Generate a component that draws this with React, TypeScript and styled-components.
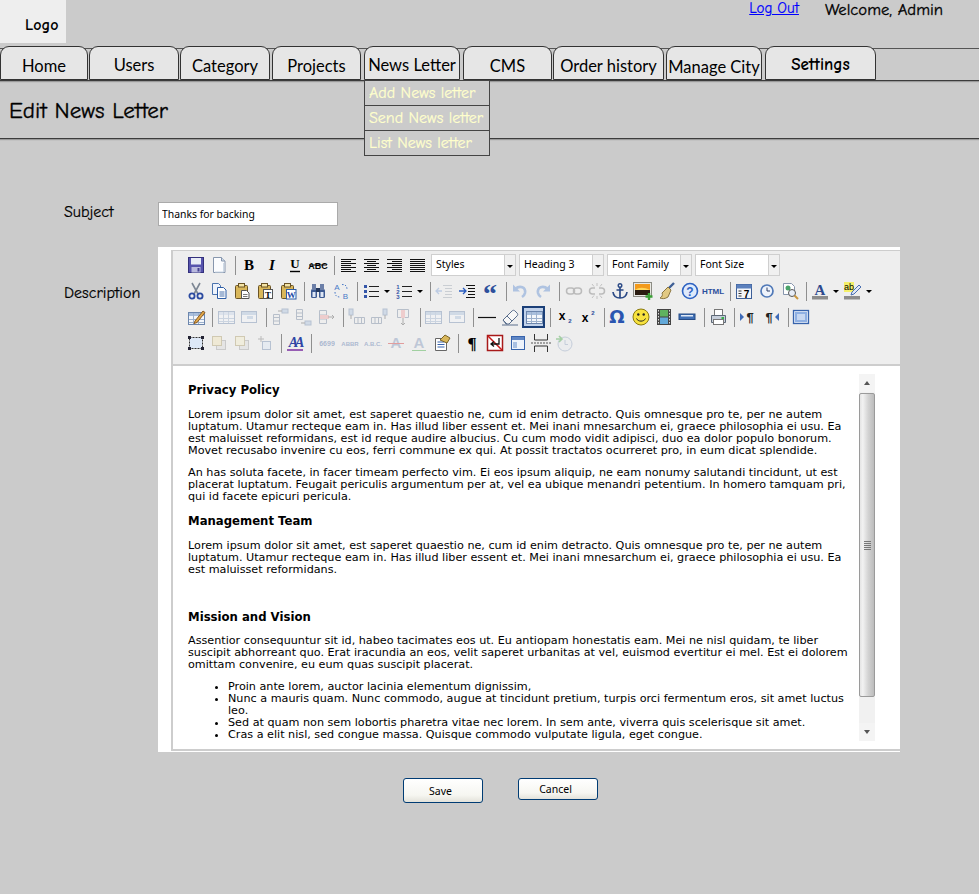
import React from "react";
import styled, { createGlobalStyle } from "styled-components";

const SKETCH = `"Comic Neue", "DejaVu Sans", sans-serif`;
const TAB = `Lato, "Open Sans", sans-serif`;
const UI = `"Noto Sans", Tahoma, sans-serif`;

const Global = createGlobalStyle`
  html, body { margin: 0; padding: 0; background: #cbcbcb; }
  body { width: 979px; height: 894px; overflow: hidden; }
`;

const Page = styled.div`width: 979px; height: 894px; background: #cbcbcb; color: #000;`;
const TopBar = styled.header`display: flex; height: 47px; align-items: flex-start; padding-right: 36px;`;
const Logo = styled.div`
  width: 66px; height: 43px; background: #eeeeee; box-sizing: border-box; padding: 16px 0 0 25px;
  font: bold 16px/18px ${SKETCH};
`;
const UserBox = styled.div`margin-left: auto; display: flex; gap: 26px; align-items: flex-start;`;
const LogOut = styled.a`color: #0000ff; text-decoration: underline; font: 15px/17px ${SKETCH}; -webkit-text-stroke: 0.2px #0000ff;`;
const Welcome = styled.span`font: 16.7px/20px ${SKETCH}; -webkit-text-stroke: 0.3px #000;`;

const Nav = styled.nav`
  display: flex; height: 33px; align-items: flex-end; padding-top: 0; position: relative;
  border-bottom: 1px solid #3c3c3c; box-shadow: 0 1px 1px #9a9a9a;
  &::before { content: ""; position: absolute; left: 0; right: 0; top: 1px; border-top: 1px solid #555; }
`;
const Tab = styled.div<{ $w: number; $gap: number; $sketch?: boolean; $shift?: number }>`
  position: relative; z-index: 1; box-sizing: border-box; width: ${p => p.$w}px; height: 34px; margin-right: ${p => p.$gap}px;
  background: #e6e6e6; border: 1px solid #333; border-bottom-width: 1px; border-radius: 9px 9px 0 0;
  display: flex; justify-content: center; align-items: center;
  padding-top: ${p => p.$shift ?? 5}px; white-space: nowrap;
  font: ${p => (p.$sketch ? `bold 17px ${SKETCH}` : `16.5px ${TAB}`)};
`;
const Drop = styled.div`
  position: absolute; top: 33px; left: -1px; width: 126px; z-index: 3; background: #cbcbcb;
  border: 1px solid #444; box-sizing: border-box;
`;
const DropItem = styled.div`
  height: 25px; box-sizing: border-box; padding-left: 4px; color: #ffffcc; font: 16px/25px ${SKETCH};
  -webkit-text-stroke: 0.2px #ffffcc; text-align: left; border-bottom: 1px solid #444;
  &:last-child { border-bottom: none; height: 24px; }
`;

const TitleBar = styled.div`height: 57px; border-bottom: 1px solid #3c3c3c; box-shadow: 0 1px 1px #9a9a9a; padding-left: 9px; display: flex; align-items: center;`;
const Title = styled.h1`margin: 2px 0 0; font: normal 23px/24px ${SKETCH}; -webkit-text-stroke: 0.35px #000;`;

const Form = styled.div`display: grid; grid-template-columns: 158px 742px; padding-top: 63px; row-gap: 21px;`;
const Label = styled.label<{ $top: number }>`padding: ${p => p.$top}px 0 0 64px; font: 16px/18px ${SKETCH}; -webkit-text-stroke: 0.2px #000;`;
const Input = styled.input`
  box-sizing: border-box; width: 180px; height: 24px; background: #fff; border: 1px solid #aaa; padding: 1px 3px; font: 10.4px ${UI}; color: #000; outline: none; display: block;
`;

const Editor = styled.div`
  height: 505px; background: #fff; padding: 3px 0 0 13px; box-sizing: border-box; display: flex; flex-direction: column;
`;
const EditorInner = styled.div`
  flex: none; height: 501px; border-left: 2px solid #cdcdcd; border-top: 1px solid #cdcdcd; border-bottom: 2px solid #cdcdcd; box-sizing: border-box; display: flex; flex-direction: column;
`;
const Toolbar = styled.div`height: 112px; background: #eeeeee; border-bottom: 2px solid #cdcdcd; padding: 1px 0 0 11px; flex: none;`;
const ToolRow = styled.div<{ $step?: number }>`
  --step: ${p => p.$step ?? 23}px; display: flex; align-items: center; height: 26px;
`;
const Btn = styled.span<{ $off?: boolean; $sel?: boolean; $w?: number }>`
  width: ${p => (p.$w ? `${p.$w}px` : "var(--step)")}; height: 22px; flex: none; display: flex; align-items: center; justify-content: center; box-sizing: border-box;
  opacity: ${p => (p.$off ? 0.42 : 1)};
  ${p => p.$sel && "background:#c2d2ea; outline:2px solid #1b3f78; outline-offset:-2px;"}
  svg { display: block; overflow: visible; }
`;
const Caret = styled.span`
  width: 10px; flex: none; display: flex; justify-content: center; padding-top: 1px;
  &::after { content: ""; border: 3px solid transparent; border-top: 3px solid #000; border-bottom: 0; }
`;
const Sep = styled.span<{ $tail?: number }>`
  width: 1px; height: 19px; background: #8f8f8f; flex: none; margin: 0 ${p => p.$tail ?? 1}px 0 5px;
`;
const Select = styled.div`
  width: 85px; height: 22px; margin-right: 3px; display: flex; flex: none; box-sizing: border-box; border: 1px solid #cfcfcf;
  &:first-of-type { margin-left: 3px; }
`;
const SelectText = styled.div`flex: 1; background: #fff; padding-left: 4px; font: 10.5px/19px ${UI};`;
const SelectArrow = styled.div`
  width: 10px; border-left: 1px solid #cfcfcf; background: #f0f0f0; display: flex; align-items: center; justify-content: center;
  &::after { content: ""; border: 3px solid transparent; border-top: 3px solid #000; border-bottom: 0; margin-top: 2px; }
`;

const Body = styled.div`flex: 1; min-height: 0; display: flex; justify-content: space-between; padding: 8px 25px 8px 15px; background: #fff;`;
const Content = styled.div`width: 668px; font: 11.2px/12px "DejaVu Sans", Verdana, sans-serif; white-space: nowrap; padding-top: 9px;`;
const H3 = styled.h3<{ $top?: number }>`margin: ${p => p.$top ?? 0}px 0 0; font: bold 11.7px/15px "DejaVu Sans", Verdana, sans-serif;`;
const Para = styled.p<{ $top?: number }>`margin: ${p => p.$top ?? 10}px 0 0;`;
const List = styled.ul`margin: 10px 0 0; padding-left: 40px;`;

const Scroll = styled.div`width: 16px; flex: none; background: #f1f1f1; display: flex; flex-direction: column; height: 367px;`;
const ScrollEnd = styled.div<{ $down?: boolean }>`
  height: 18px; flex: none; display: flex; align-items: center; justify-content: center; background: #f4f4f4;
  &::after { content: ""; border: 3.5px solid transparent; ${p => (p.$down ? "border-top: 4px solid #555; border-bottom: 0;" : "border-bottom: 4px solid #555; border-top: 0;")} }
`;
const Thumb = styled.div`
  height: 304px; margin: 1px 0 0 0; box-sizing: border-box; border: 1px solid #9a9a9a; border-radius: 2px; flex: none;
  background: linear-gradient(90deg, #e4e4e4, #f2f2f2 20%, #d2d2d2 60%, #bcbcbc 100%); display: flex; align-items: center; justify-content: center;
`;
const Grip = styled.div`width: 7px; height: 9px; margin-top: 0; background: repeating-linear-gradient(180deg, #777 0 1px, transparent 1px 2px);`;
const ScrollFill = styled.div`flex: 1;`;

const Actions = styled.div`display: flex; gap: 35px; padding: 26px 0 0 403px; align-items: flex-start;`;
const Button = styled.button<{ $h: number }>`
  width: 80px; height: ${p => p.$h}px; box-sizing: border-box; border: 1px solid #003c74; border-radius: 3px;
  background: linear-gradient(180deg, #ffffff, #f6f6f1 70%, #e3e2da); font: 10.5px ${UI}; color: #000; padding: 0 5px 0 0;
`;

/* ---------- toolbar drawings ---------- */
const S: React.FC<{ children: React.ReactNode; w?: number }> = ({ children, w = 18 }) => (
  <svg width={w} height={18} viewBox={`0 0 ${w} 18`}>{children}</svg>
);
const lines = (rows: number[][]) => rows.map(r => `M${r[0]} ${r[2]}H${r[1]}`).join("");
const T: React.FC<{ x?: number; y?: number; s?: number; f?: string; c?: string; w?: string; it?: boolean; ls?: number; children: string }> = ({ x = 9, y = 14, s = 13, f = "Liberation Serif", c = "#000", w = "bold", it, ls, children }) => (
  <text x={x} y={y} fontSize={s} fontFamily={f} fill={c} fontWeight={w} fontStyle={it ? "italic" : "normal"} letterSpacing={ls} textAnchor="middle">{children}</text>
);
const Clip = ({ children }: { children?: React.ReactNode }) => (
  <g>
    <rect x="2.5" y="3.5" width="12" height="13" rx="1" fill="#d9b75a" stroke="#6b5426" />
    <rect x="5.5" y="1.5" width="6" height="3.5" fill="#f3e3a5" stroke="#6b5426" />
    {children}
  </g>
);
const Grid = ({ hl, x = 1, y = 3, w = 16, h = 12 }: { hl?: string; x?: number; y?: number; w?: number; h?: number }) => (
  <g>
    <rect x={x + 0.5} y={y + 0.5} width={w} height={h} fill="#f4f7fb" stroke="#6c86ad" />
    <rect x={x + 1} y={y + 1} width={w - 1} height="3" fill={hl ?? "#a9bfdd"} />
    <path d={`M${x + 1} ${y + 7.5}H${x + w}M${x + 1} ${y + 10.5}H${x + w}M${x + 5.5} ${y + 1}V${y + h}M${x + 10.5} ${y + 1}V${y + h}`} stroke="#9db1cd" fill="none" />
  </g>
);
const Stack = ({ a = "#f2e3b3" }: { a?: string }) => (
  <g>
    <rect x="6.5" y="6.5" width="9" height="9" fill="#d9d9d9" stroke="#999" />
    <rect x="2.5" y="2.5" width="9" height="9" fill={a} stroke="#a89760" />
  </g>
);
const Col = ({ d, c = "#6d7f99" }: { d: string; c?: string }) => <path d={d} stroke={c} fill="none" />;

const icons: Record<string, React.ReactNode> = {
  save: <S><rect x="1.5" y="1.5" width="15" height="15" fill="#5653ad" stroke="#33307c" /><rect x="4" y="2" width="10" height="6.5" fill="#e8ecf6" /><rect x="4.5" y="11" width="9" height="5.5" fill="#b9b9de" /><rect x="10.5" y="12" width="2" height="3.5" fill="#44418f" /></S>,
  newdoc: <S><path d="M3.5 1.5h8l3.5 3.5v11.5h-11.5z" fill="#fbfcfe" stroke="#8796ad" /><path d="M11.5 1.5v3.5h3.5" fill="#cfdbe9" stroke="#8796ad" /><path d="M13.5 7v9H5" stroke="#cdd9e6" fill="none" /></S>,
  b: <S><T s={15}>B</T></S>,
  i: <S><T s={15} it>I</T></S>,
  u: <S><T s={13} y={12}>U</T><path d="M4 15.5h10" stroke="#000" strokeWidth="1.4" /></S>,
  abc: <S w={20}><T x={10} y={12.5} s={9} f="Liberation Sans">ABC</T><path d="M1 9h18" stroke="#000" /></S>,
  al: <S><path d={lines([[2, 17, 3], [2, 12, 5], [2, 17, 7], [2, 12, 9], [2, 17, 11], [2, 12, 13], [2, 17, 15]].map(r => [r[0], r[1], r[2] + 0.5]))} stroke="#111" /></S>,
  ac: <S><path d={lines([[2, 17, 3], [5, 14, 5], [2, 17, 7], [5, 14, 9], [2, 17, 11], [5, 14, 13], [2, 17, 15]].map(r => [r[0], r[1], r[2] + 0.5]))} stroke="#111" /></S>,
  ar: <S><path d={lines([[2, 17, 3], [7, 17, 5], [2, 17, 7], [7, 17, 9], [2, 17, 11], [7, 17, 13], [2, 17, 15]].map(r => [r[0], r[1], r[2] + 0.5]))} stroke="#111" /></S>,
  aj: <S><path d={lines([3, 5, 7, 9, 11, 13, 15].map(y => [2, 17, y + 0.5]))} stroke="#111" /></S>,
  cut: <S><path d="M5 1l6 11M13 1L7 12" stroke="#7d8794" strokeWidth="1.6" fill="none" /><circle cx="5" cy="14" r="2.6" fill="none" stroke="#2b4aa0" strokeWidth="1.8" /><circle cx="13" cy="14" r="2.6" fill="none" stroke="#2b4aa0" strokeWidth="1.8" /></S>,
  copy: <S><path d="M2.5 1.5h6l2 2v9h-8z" fill="#eef3fb" stroke="#4b73ad" /><path d="M7.5 5.5h6l2.5 2.5v8.5h-8.5z" fill="#fff" stroke="#2d5da6" /><path d="M9.5 10h5M9.5 12h5M9.5 14h5" stroke="#4b73ad" /></S>,
  paste: <S><Clip><path d="M8.5 8.5h5l2.5 2.5v5.5h-7.5z" fill="#fff" stroke="#555" /><path d="M10 12.5h4.5M10 14.5h4.5" stroke="#777" /></Clip></S>,
  pastet: <S><Clip><rect x="7.5" y="7.5" width="9" height="9" fill="#fff" stroke="#555" /><T x={12} y={15.5} s={9}>T</T></Clip></S>,
  pastew: <S><Clip><rect x="7.5" y="7.5" width="9.5" height="9.5" fill="#fff" stroke="#2d5da6" /><T x={12.2} y={15.7} s={9} c="#2247a5">W</T></Clip></S>,
  find: <S><rect x="2" y="7" width="6" height="9" rx="1.5" fill="#3d5a92" /><rect x="10" y="7" width="6" height="9" rx="1.5" fill="#3d5a92" /><rect x="3" y="2" width="4" height="6" fill="#6c7fa8" /><rect x="11" y="2" width="4" height="6" fill="#6c7fa8" /><rect x="7" y="6" width="4" height="4" fill="#24395f" /><rect x="3.5" y="10" width="3" height="5" fill="#dfe7f5" /><rect x="11.5" y="10" width="3" height="5" fill="#dfe7f5" /></S>,
  replace: <S><T x={5} y={8} s={8} f="Liberation Sans" c="#4a7bc8" w="normal">A</T><T x={13.5} y={16.5} s={8} f="Liberation Sans" c="#4a7bc8" w="normal">B</T><path d="M10 2.5c4 0 5 2 5 5M3 10c0 3 1 5 5 5" stroke="#4a7bc8" strokeDasharray="1.5 1.5" fill="none" /></S>,
  ul: <S><path d="M7 4.5h10M7 9.5h10M7 14.5h10" stroke="#222" /><rect x="2" y="3" width="3" height="3" fill="#3456a8" /><rect x="2" y="8" width="3" height="3" fill="#3456a8" /><rect x="2" y="13" width="3" height="3" fill="#3456a8" /></S>,
  ol: <S><path d="M7 4.5h10M7 9.5h10M7 14.5h10" stroke="#222" /><T x={3} y={6.5} s={6} f="Liberation Sans" c="#3456a8">1</T><T x={3} y={11.5} s={6} f="Liberation Sans" c="#3456a8">2</T><T x={3} y={16.5} s={6} f="Liberation Sans" c="#3456a8">3</T></S>,
  outdent: <S><path d={lines([[8, 17, 3.5], [10, 17, 6.5], [10, 17, 9.5], [10, 17, 12.5], [8, 17, 15.5]])} stroke="#9aa3b0" /><path d="M1 9h6M4 6L1 9l3 3" stroke="#7b9fd6" fill="none" strokeWidth="1.3" /></S>,
  indent: <S><path d={lines([[8, 17, 3.5], [10, 17, 6.5], [10, 17, 9.5], [10, 17, 12.5], [8, 17, 15.5]])} stroke="#111" /><path d="M1 9h6M5 6l3 3-3 3" stroke="#2a5cc0" fill="none" strokeWidth="1.3" /></S>,
  quote: <S><T x={9} y={21} s={28} c="#2d4f9c">“</T></S>,
  undo: <S><path d="M4 7c5-4 11-2 10 4-.4 2-1.5 3-3 4" fill="none" stroke="#5a8ad0" strokeWidth="2.6" /><path d="M2 2.5v7h7z" fill="#5a8ad0" /></S>,
  redo: <S><path d="M14 7C9 3 3 5 4 11c.4 2 1.5 3 3 4" fill="none" stroke="#5a8ad0" strokeWidth="2.6" /><path d="M16 2.5v7H9z" fill="#5a8ad0" /></S>,
  link: <S><rect x="1.5" y="6" width="8" height="6" rx="3" fill="none" stroke="#777" strokeWidth="1.5" /><rect x="8.5" y="6" width="8" height="6" rx="3" fill="none" stroke="#777" strokeWidth="1.5" /></S>,
  unlink: <S><path d="M7 6H4.5a3 3 0 000 6H7M11 6h2.5a3 3 0 010 6H11" fill="none" stroke="#777" strokeWidth="1.5" /><path d="M9 1v3M9 14v3M4 2l2 2.5M14 2l-2 2.5M4 16l2-2.5M14 16l-2-2.5" stroke="#888" /></S>,
  anchor: <S><circle cx="9" cy="3.5" r="1.8" fill="none" stroke="#2c4a86" strokeWidth="1.4" /><path d="M9 5v11M5.5 8h7" stroke="#2c4a86" strokeWidth="1.7" /><path d="M2 10c.5 4 3.5 6 7 6s6.5-2 7-6" fill="none" stroke="#2c4a86" strokeWidth="1.7" /></S>,
  image: <S w={20}><rect x="0.5" y="0.5" width="18" height="14" fill="#e9e9e4" stroke="#8c8c84" /><rect x="2" y="2" width="15" height="6" fill="#f39a1b" /><rect x="2" y="8" width="15" height="5" fill="#2a1c10" /><path d="M2 8c4-3 9-3 15 0" fill="#ffd65a" /><path d="M16 11v7M12.5 14.5h7" stroke="#3aa035" strokeWidth="2.4" /></S>,
  broom: <S><path d="M16 1l-6 6" stroke="#3f5f95" strokeWidth="2.4" /><path d="M10 5l3 3-3 7c-3 2-6 2-8 1 2-1 3-3 2-5z" fill="#e2c982" stroke="#8a7540" /></S>,
  help: <S><circle cx="9" cy="9" r="7.5" fill="#dfeafb" stroke="#2d62c2" strokeWidth="1.6" /><T x={9} y={13.5} s={12} f="Liberation Sans" c="#2d62c2">?</T></S>,
  html: <S w={22}><T x={11} y={12} s={8} f="Liberation Sans" c="#2b4f9c">HTML</T></S>,
  date: <S><rect x="1.5" y="2.5" width="15" height="14" fill="#f3f6fb" stroke="#3d5f98" /><rect x="1.5" y="2.5" width="15" height="4" fill="#5b80bd" /><T x={11.5} y={15.5} s={10} f="Liberation Sans">7</T><path d="M3.5 9h3M3.5 11.500h3M3.500 14h3" stroke="#333" /></S>,
  time: <S><circle cx="9" cy="9" r="6" fill="#eef3fb" stroke="#5079b8" strokeWidth="1.7" /><path d="M9 5.5v3.5h3" stroke="#2d3f66" fill="none" /></S>,
  preview: <S><path d="M2.5 1.5h8l3 3v8h-11z" fill="#fff" stroke="#8796ad" /><circle cx="7" cy="6" r="2.5" fill="#4aa36a" /><circle cx="11" cy="11" r="3.5" fill="#e8eef8" stroke="#555" /><path d="M13.5 13.5l3.5 3.5" stroke="#c9963f" strokeWidth="2" /></S>,
  fore: <S><T x={9} y={12.5} s={15} c="#2d4a8e">A</T><rect x="1" y="14" width="16" height="3.5" fill="#8c8c8c" /></S>,
  back: <S><rect x="0" y="0" width="10" height="10" fill="#f4f06a" /><T x={5} y={8} s={9} f="Liberation Sans" w="normal">ab</T><path d="M8 10l7-7 2 2-7 7-3 1z" fill="#dfe7f5" stroke="#4a6fb0" /><rect x="0" y="14" width="16" height="3.5" fill="#8c8c8c" /></S>,
  tedit: <S w={18}><Grid y={4} /><path d="M8 13l8-10 2 1.5-8 10-3 1z" fill="#e0a84a" stroke="#8a5a20" /></S>,
  trow: <S><Grid hl="#c8d6ea" /></S>,
  tcell: <S><rect x="1.5" y="3.5" width="15" height="11" fill="#f4f7fb" stroke="#6c86ad" /><rect x="2" y="4" width="14" height="3" fill="#a9bfdd" /><rect x="7" y="8" width="6" height="3" fill="#a9bfdd" /></S>,
  rowb: <S><Col d="M2.5 6.5h6v10h-6zM2.5 9.5h6M2.5 13h6" /><rect x="11" y="1" width="6" height="4" fill="#a9bfdd" stroke="#6c86ad" /><path d="M11 3H7" stroke="#555" /></S>,
  rowa: <S><Col d="M2.5 1.5h6v10h-6zM2.5 5h6M2.5 8.5h6" /><rect x="11" y="13" width="6" height="4" fill="#a9bfdd" stroke="#6c86ad" /><path d="M11 15H7" stroke="#555" /></S>,
  rowd: <S><Col d="M2.5 2.5h7v13h-7zM2.5 7h7M2.5 11h7" /><rect x="3" y="7" width="9" height="4" fill="#f0a0a0" /><path d="M11 9h6M15 7l2 2-2 2" stroke="#555" fill="none" /></S>,
  colb: <S><Col d="M7.5 9.5h10v6h-10zM11 9.5v6M14.5 9.5v6" /><rect x="2" y="1" width="4" height="6" fill="#a9bfdd" stroke="#6c86ad" /><path d="M4 7v4" stroke="#555" /></S>,
  cola: <S><Col d="M.5 9.5h10v6H.5zM4 9.5v6M7.5 9.5v6" /><rect x="12" y="1" width="4" height="6" fill="#a9bfdd" stroke="#6c86ad" /><path d="M14 7v4" stroke="#555" /></S>,
  cold: <S><Col d="M3.5 1.5h11v8h-11z" /><rect x="7" y="2" width="4" height="8" fill="#f0a0a0" /><path d="M9 10v7M7 15l2 2 2-2" stroke="#555" fill="none" /></S>,
  hr: <S w={20}><path d="M1 9.5h18" stroke="#111" strokeWidth="1.2" /></S>,
  eraser: <S><path d="M2 12l9-9c1-1 2-1 3 0l2 2c1 1 1 2 0 3l-8 8H5z" fill="#f7f7f7" stroke="#5a6e8c" /><path d="M2 12l4 4M1 17h16" stroke="#5a6e8c" /><path d="M6 8l5 5" stroke="#5a6e8c" /></S>,
  table: <S><Grid /></S>,
  sub: <S><T x={7} y={12} s={12} f="Liberation Sans">x</T><T x={15} y={15} s={6} f="Liberation Sans" c="#2d4f9c">2</T></S>,
  sup: <S><T x={7} y={14} s={12} f="Liberation Sans">x</T><T x={15} y={7} s={6} f="Liberation Sans" c="#2d4f9c">2</T></S>,
  omega: <S><T x={9} y={15} s={18} f="DejaVu Sans" c="#2a55b0">Ω</T></S>,
  smile: <S><circle cx="9" cy="9" r="8" fill="#f7e23e" stroke="#8a7a10" /><circle cx="6.3" cy="6.5" r="1.2" fill="#222" /><circle cx="11.7" cy="6.5" r="1.2" fill="#222" /><path d="M4.5 10.5c1.5 3.5 7.5 3.5 9 0" fill="none" stroke="#222" /></S>,
  media: <S><rect x="2" y="1" width="14" height="16" fill="#444" /><rect x="5" y="2" width="8" height="6.5" fill="#5fb25f" /><rect x="5" y="9.5" width="8" height="6.5" fill="#62a8d8" /><path d="M3.5 2v14M14.5 2v14" stroke="#ddd" strokeDasharray="1.5 1.5" /></S>,
  ins: <S><rect x="1" y="6" width="16" height="5.5" fill="#3f6fb5" stroke="#254a84" /><rect x="3" y="7" width="12" height="1.5" fill="#dfe9f7" /></S>,
  print: <S><rect x="5.5" y="1.5" width="8" height="6" fill="#fff" stroke="#777" /><path d="M2.5 7.5h14v7h-14z" fill="#c7cfdb" stroke="#5d6876" /><rect x="4.5" y="11.5" width="10" height="5" fill="#fff" stroke="#777" /><rect x="12.5" y="9" width="2.5" height="2" fill="#36b04a" /></S>,
  ltr: <S><path d="M1 5l4 4-4 4z" fill="#3e6bb8" /><T x={11} y={14} s={13} f="Liberation Sans" c="#222">¶</T></S>,
  rtl: <S><T x={7} y={14} s={13} f="Liberation Sans" c="#222">¶</T><path d="M17 5l-4 4 4 4z" fill="#3e6bb8" /></S>,
  full: <S><rect x="1.5" y="2.5" width="15" height="13" fill="#e6eefa" stroke="#3763ac" strokeWidth="1.3" /><rect x="3" y="4" width="12" height="10" fill="#8fb0e3" /><path d="M5 7h8M5 9h8M5 11h8" stroke="#fff" /></S>,
  abs: <S><rect x="2.5" y="3.5" width="13" height="11" fill="#dde8f7" stroke="#333" strokeDasharray="2 1" /><path d="M1 2h3v3H1zM14 2h3v3h-3zM1 13h3v3H1zM14 13h3v3h-3z" fill="#223" /></S>,
  front: <S><Stack /></S>,
  backl: <S><Stack a="#f5ecc6" /></S>,
  pos: <S><path d="M5 2v6M2 5h6" stroke="#777" /><rect x="6.5" y="7.5" width="8" height="8" fill="#dce7f6" stroke="#6c86ad" /></S>,
  styleprops: <S><T x={9} y={13} s={14} f="Liberation Serif" c="#2d45a5" it ls={-3}>AA</T><path d="M1 16h16" stroke="#7a2da0" strokeWidth="1.5" /></S>,
  cite: <S w={20}><T x={10} y={12} s={7} f="Liberation Sans" c="#4e6ea8">6699</T></S>,
  abbr: <S w={20}><T x={10} y={12} s={6} f="Liberation Sans" c="#4e6ea8">ABBR</T></S>,
  acr: <S w={20}><T x={10} y={12} s={6} f="Liberation Sans" c="#4e6ea8">A.B.C.</T></S>,
  del: <S><T x={9} y={14} s={15} f="Liberation Sans" c="#7d93b8">A</T><path d="M1 9.5h16" stroke="#d03030" /></S>,
  insA: <S><T x={9} y={14} s={15} f="Liberation Sans" c="#7d93b8">A</T><path d="M2 16.5h14" stroke="#38a838" /></S>,
  attr: <S><path d="M2.5 4.5h11v12h-11z" fill="#fff" stroke="#666" /><path d="M4.5 8h7M4.5 10.5h7M4.5 13h7" stroke="#3763ac" /><path d="M7 6l5-5 5 3-3 5z" fill="#d9b75a" stroke="#7a6428" /></S>,
  para: <S><T x={9} y={15} s={17} f="Liberation Serif">¶</T></S>,
  nbsp: <S><rect x="1.5" y="1.5" width="15" height="15" fill="#fff" stroke="#a81a1a" strokeWidth="1.5" /><path d="M2 2l14 14" stroke="#c81a1a" strokeWidth="1.5" /><path d="M13 4v6H5M8 7.5L5 10l3 2.5" stroke="#111" fill="none" strokeWidth="1.3" /></S>,
  template: <S><rect x="2.5" y="2.5" width="13" height="13" fill="#eef3fb" stroke="#3763ac" /><rect x="3" y="3" width="12" height="3" fill="#5f86c4" /><rect x="4" y="8" width="4" height="6" fill="#a9c0e2" /></S>,
  pagebreak: <S w={20}><path d="M3.5 0v6h13V0M3.5 18v-6h13v6" stroke="#333" fill="none" /><path d="M0 9h20" stroke="#555" strokeDasharray="2 1" /></S>,
  draft: <S><circle cx="10" cy="10" r="7" fill="#e7eaf0" stroke="#8ea2c0" /><path d="M10 6v4.5h3" stroke="#8ea2c0" fill="none" /><path d="M1 5h6M4 2l3 3-3 3" stroke="#3fa53f" fill="none" strokeWidth="1.6" /></S>,
};

const I: React.FC<{ n: string; off?: boolean; sel?: boolean; w?: number }> = ({ n, off, sel, w }) => (
  <Btn $off={off} $sel={sel} $w={w}>{icons[n]}</Btn>
);
const off = (names: string[]) => names.map(n => <I key={n} n={n} off />);
const on = (names: string[]) => names.map(n => <I key={n} n={n} />);

const pad = (t: string) => t.split("\n").map((l, i) => <React.Fragment key={i}>{i > 0 && <br />}{l}</React.Fragment>);

const tabs = [
  { t: "Home", w: 88, g: 1 }, { t: "Users", w: 90, g: 1, s: 3 }, { t: "Category", w: 90, g: 2 }, { t: "Projects", w: 89, g: 3 },
  { t: "News Letter", w: 96, g: 3, s: 3, drop: true }, { t: "CMS", w: 89, g: 1 }, { t: "Order history", w: 111, g: 2 },
  { t: "Manage City", w: 96, g: 3, s: 7 }, { t: "Settings", w: 111, g: 0, s: 3, k: true },
];

const App: React.FC = () => (
  <Page>
    <Global />
    <TopBar>
      <Logo>Logo</Logo>
      <UserBox>
        <LogOut href="#">Log Out</LogOut>
        <Welcome>Welcome, Admin</Welcome>
      </UserBox>
    </TopBar>
    <Nav>
      {tabs.map(t => (
        <Tab key={t.t} $w={t.w} $gap={t.g} $shift={t.s} $sketch={t.k}>
          {t.t}
          {t.drop && (
            <Drop>
              <DropItem>Add News letter</DropItem>
              <DropItem>Send News letter</DropItem>
              <DropItem>List News letter</DropItem>
            </Drop>
          )}
        </Tab>
      ))}
    </Nav>
    <TitleBar><Title>Edit News Letter</Title></TitleBar>
    <Form>
      <Label $top={1}>Subject</Label>
      <Input defaultValue="Thanks for backing" />
      <Label $top={37}>Description</Label>
      <Editor>
        <EditorInner>
          <Toolbar>
            <ToolRow>
              {on(["save", "newdoc"])}<Sep />{on(["b", "i", "u", "abc"])}<Sep />{on(["al", "ac", "ar", "aj"])}
              {["Styles", "Heading 3", "Font Family", "Font Size"].map(s => (
                <Select key={s}><SelectText>{s}</SelectText><SelectArrow /></Select>
              ))}
            </ToolRow>
            <ToolRow>
              {on(["cut", "copy", "paste", "pastet", "pastew"])}<Sep />{on(["find", "replace"])}<Sep />
              <I n="ul" /><Caret /><I n="ol" /><Caret /><Sep />
              <I n="outdent" off /><I n="indent" /><I n="quote" /><Sep />
              {off(["undo", "redo"])}<Sep $tail={2} />{off(["link", "unlink"])}
              <I n="anchor" /><I n="image" w={24} /><I n="broom" /><I n="help" /><I n="html" w={24} /><Sep />
              {on(["date", "time", "preview"])}<Sep />
              <I n="fore" /><Caret /><I n="back" /><Caret />
            </ToolRow>
            <ToolRow $step={23.3}>
              <I n="tedit" /><Sep />{off(["trow", "tcell"])}<Sep />{off(["rowb", "rowa", "rowd"])}<Sep />
              {off(["colb", "cola", "cold"])}<Sep />{off(["table", "tcell"])}<Sep />
              <I n="hr" /><I n="eraser" /><I n="table" sel /><Sep />{on(["sub", "sup"])}<Sep />
              {on(["omega", "smile", "media", "ins"])}<Sep /><I n="print" /><Sep />{on(["ltr", "rtl"])}<Sep /><I n="full" />
            </ToolRow>
            <ToolRow>
              <I n="abs" />{off(["front", "backl", "pos"])}<Sep /><I n="styleprops" /><Sep $tail={3} />
              {off(["cite", "abbr", "acr", "del", "insA"])}<I n="attr" /><Sep />
              {on(["para", "nbsp", "template", "pagebreak"])}<I n="draft" off />
            </ToolRow>
          </Toolbar>
          <Body>
            <Content>
              <H3>Privacy Policy</H3>
              <Para $top={11}>{pad("Lorem ipsum dolor sit amet, est saperet quaestio ne, cum id enim detracto. Quis omnesque pro te, per ne autem\nluptatum. Utamur recteque eam in. Has illud liber essent et. Mei inani mnesarchum ei, graece philosophia ei usu. Ea\nest maluisset reformidans, est id reque audire albucius. Cu cum modo vidit adipisci, duo ea dolor populo bonorum.\nMovet recusabo invenire cu eos, ferri commune ex qui. At possit tractatos ocurreret pro, in eum dicat splendide.")}</Para>
              <Para>{pad("An has soluta facete, in facer timeam perfecto vim. Ei eos ipsum aliquip, ne eam nonumy salutandi tincidunt, ut est\nplacerat luptatum. Feugait periculis argumentum per at, vel ea ubique menandri petentium. In homero tamquam pri,\nqui id facete epicuri pericula.")}</Para>
              <H3 $top={11}>Management Team</H3>
              <Para $top={11}>{pad("Lorem ipsum dolor sit amet, est saperet quaestio ne, cum id enim detracto. Quis omnesque pro te, per ne autem\nluptatum. Utamur recteque eam in. Has illud liber essent et. Mei inani mnesarchum ei, graece philosophia ei usu. Ea\nest maluisset reformidans.")}</Para>
              <H3 $top={34}>Mission and Vision</H3>
              <Para>{pad("Assentior consequuntur sit id, habeo tacimates eos ut. Eu antiopam honestatis eam. Mei ne nisl quidam, te liber\nsuscipit abhorreant quo. Erat iracundia an eos, velit saperet urbanitas at vel, euismod evertitur ei mel. Est ei dolorem\nomittam convenire, eu eum quas suscipit placerat.")}</Para>
              <List>
                <li>Proin ante lorem, auctor lacinia elementum dignissim,</li>
                <li>{pad("Nunc a mauris quam. Nunc commodo, augue at tincidunt pretium, turpis orci fermentum eros, sit amet luctus\nleo.")}</li>
                <li>Sed at quam non sem lobortis pharetra vitae nec lorem. In sem ante, viverra quis scelerisque sit amet.</li>
                <li>Cras a elit nisl, sed congue massa. Quisque commodo vulputate ligula, eget congue.</li>
              </List>
            </Content>
            <Scroll>
              <ScrollEnd />
              <Thumb><Grip /></Thumb>
              <ScrollFill />
              <ScrollEnd $down />
            </Scroll>
          </Body>
        </EditorInner>
      </Editor>
    </Form>
    <Actions>
      <Button $h={25}>Save</Button>
      <Button $h={22}>Cancel</Button>
    </Actions>
  </Page>
);

export default App;
